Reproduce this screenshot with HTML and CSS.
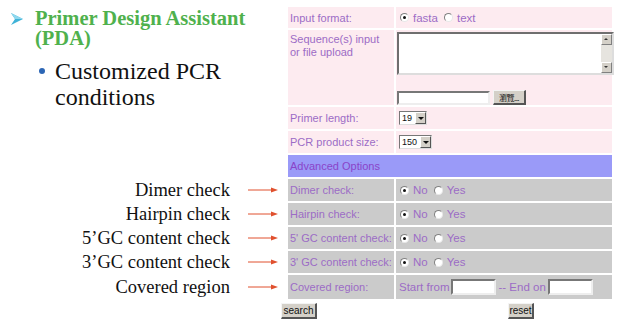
FILE: index.html
```html
<!DOCTYPE html>
<html lang="en">
<head>
    <meta charset="UTF-8">
    <title>Primer Design Assistant (PDA)</title>
    <link rel="stylesheet" href="styles.css">
</head>
<body>
    <div class="slide">
        <div class="intro">
            <h1 class="title">
                <svg class="chevron" width="14" height="14" viewBox="0 0 14 14">
                    <polygon points="1,1 13,7 1,13 5,7" fill="#3fb3d8"/>
                    <polygon points="1,1 13,7 5,7" fill="#8fd8ee"/>
                </svg>
                <span>Primer Design Assistant (PDA)</span>
            </h1>
            <p class="bullet"><span class="dot"></span>Customized PCR conditions</p>
        </div>

        <div class="label pink">Input format:</div>
        <div class="value pink">
            <span class="radio on"></span>fasta
            <span class="radio"></span>text
        </div>

        <div class="label pink top">Sequence(s) input<br>or file upload</div>
        <div class="value pink stack">
            <div class="textarea">
                <div class="scroll">
                    <span class="sbtn up"></span>
                    <span class="sbtn down"></span>
                </div>
            </div>
            <div class="file">
                <span class="field wide"></span>
                <span class="btn browse">瀏覽...</span>
            </div>
        </div>

        <div class="label pink">Primer length:</div>
        <div class="value pink"><span class="select">19<span class="arrow"></span></span></div>

        <div class="label pink">PCR product size:</div>
        <div class="value pink"><span class="select">150<span class="arrow"></span></span></div>

        <div class="advanced">Advanced Options</div>

        <div class="note">Dimer check</div>
        <div class="pointer"><svg width="30" height="6" viewBox="0 0 30 6"><line x1="0" y1="3" x2="24" y2="3" stroke="#e0502e" stroke-width="1"/><polygon points="23,0.5 30,3 23,5.5" fill="#e0502e"/></svg></div>
        <div class="label grey">Dimer check:</div>
        <div class="value grey"><span class="radio on"></span>No <span class="radio"></span>Yes</div>

        <div class="note">Hairpin check</div>
        <div class="pointer"><svg width="30" height="6" viewBox="0 0 30 6"><line x1="0" y1="3" x2="24" y2="3" stroke="#e0502e" stroke-width="1"/><polygon points="23,0.5 30,3 23,5.5" fill="#e0502e"/></svg></div>
        <div class="label grey">Hairpin check:</div>
        <div class="value grey"><span class="radio on"></span>No <span class="radio"></span>Yes</div>

        <div class="note">5’GC content check</div>
        <div class="pointer"><svg width="30" height="6" viewBox="0 0 30 6"><line x1="0" y1="3" x2="24" y2="3" stroke="#e0502e" stroke-width="1"/><polygon points="23,0.5 30,3 23,5.5" fill="#e0502e"/></svg></div>
        <div class="label grey">5' GC content check:</div>
        <div class="value grey"><span class="radio on"></span>No <span class="radio"></span>Yes</div>

        <div class="note">3’GC content check</div>
        <div class="pointer"><svg width="30" height="6" viewBox="0 0 30 6"><line x1="0" y1="3" x2="24" y2="3" stroke="#e0502e" stroke-width="1"/><polygon points="23,0.5 30,3 23,5.5" fill="#e0502e"/></svg></div>
        <div class="label grey">3' GC content check:</div>
        <div class="value grey"><span class="radio on"></span>No <span class="radio"></span>Yes</div>

        <div class="note">Covered region</div>
        <div class="pointer"><svg width="30" height="6" viewBox="0 0 30 6"><line x1="0" y1="3" x2="24" y2="3" stroke="#e0502e" stroke-width="1"/><polygon points="23,0.5 30,3 23,5.5" fill="#e0502e"/></svg></div>
        <div class="label grey">Covered region:</div>
        <div class="value grey">Start from <span class="field"></span> -- End on <span class="field"></span></div>

        <div class="actions">
            <span class="btn">search</span>
            <span class="btn reset">reset</span>
        </div>
    </div>
</body>
</html>
```

FILE: styles.css
```css
body {
    margin: 0;
    background-color: #fff;
    font-family: "Liberation Sans", Arial, sans-serif;
}

.slide {
    display: grid;
    grid-template-columns: 236px 48px 106px 216px;
    grid-template-rows: 21px 75px 22px 22px 22px 22px 22px 22px 22px 24px auto;
    column-gap: 2px;
    row-gap: 2px;
    padding-top: 7px;
    width: 620px;
}

.intro {
    grid-column: 1 / 3;
    grid-row: 1 / 6;
    font-family: "Liberation Serif", "Times New Roman", serif;
}

.title {
    display: flex;
    align-items: flex-start;
    margin: 0;
    padding: 1px 0 0 10px;
    font-size: 20.5px;
    line-height: 20px;
    color: #4fb14d;
}

.chevron {
    flex: none;
    margin: 4px 11px 0 0;
}

.bullet {
    position: relative;
    margin: 10px 0 0 55px;
    font-size: 24px;
    line-height: 26px;
    color: #111;
}

.dot {
    position: absolute;
    left: -16px;
    top: 10px;
    width: 6px;
    height: 6px;
    border-radius: 50%;
    background-color: #2c66b5;
}

.label, .value, .advanced {
    display: flex;
    align-items: center;
    font-size: 11px;
    color: #9c6cc6;
    white-space: nowrap;
}

.label {
    padding-left: 2px;
}

.label.top {
    align-items: flex-start;
    padding-top: 3px;
    line-height: 13px;
}

.value {
    padding-left: 3px;
    font-size: 11.5px;
}

.pink {
    background-color: #fdebf0;
}

.grey {
    background-color: #cbcbcb;
}

.advanced {
    grid-column: 3 / 5;
    padding-left: 2px;
    background-color: #9a9af8;
    color: #8a44c8;
}

.note {
    grid-column: 1;
    display: flex;
    align-items: center;
    justify-content: flex-end;
    padding-right: 6px;
    font-family: "Liberation Serif", "Times New Roman", serif;
    font-size: 18.5px;
    color: #111;
}

.pointer {
    display: flex;
    align-items: center;
    padding-left: 10px;
}

.radio {
    display: inline-block;
    position: relative;
    box-sizing: border-box;
    width: 9px;
    height: 9px;
    margin: 0 4px 0 1px;
    border-radius: 50%;
    border: 1px solid #808080;
    border-right-color: #e8e8e8;
    border-bottom-color: #e8e8e8;
    background-color: #fff;
}

.value .radio ~ .radio {
    margin-left: 6px;
}

.radio.on::after {
    content: "";
    position: absolute;
    left: 2px;
    top: 2px;
    width: 3px;
    height: 3px;
    border-radius: 50%;
    background-color: #111;
}

.stack {
    flex-direction: column;
    align-items: flex-start;
    padding: 2px 0 0 1px;
}

.textarea {
    position: relative;
    box-sizing: border-box;
    width: 217px;
    height: 44px;
    background-color: #fff;
    border: 2px solid #6f6f6f;
    border-right-color: #ddd;
    border-bottom-color: #ddd;
}

.scroll {
    position: absolute;
    right: 0;
    top: 0;
    bottom: 0;
    width: 11px;
    display: flex;
    flex-direction: column;
    justify-content: space-between;
    background-color: #e6e4df;
}

.sbtn {
    position: relative;
    height: 11px;
    background-color: #d4d0c8;
    border: 1px solid #fff;
    border-right-color: #808080;
    border-bottom-color: #808080;
    box-sizing: border-box;
}

.sbtn::after {
    content: "";
    position: absolute;
    left: 2px;
    top: 3px;
    border-left: 2px solid transparent;
    border-right: 2px solid transparent;
}

.sbtn.up::after {
    border-bottom: 2px solid #333;
}

.sbtn.down::after {
    border-top: 2px solid #333;
}

.file {
    display: flex;
    align-items: center;
    gap: 3px;
    margin-top: 15px;
}

.field {
    display: inline-block;
    box-sizing: border-box;
    width: 45px;
    height: 16px;
    margin: 0 2px;
    background-color: #fff;
    border: 2px solid #777;
    border-right-color: #eee;
    border-bottom-color: #eee;
}

.field.wide {
    width: 93px;
    height: 14px;
    margin: 0;
}

.btn {
    display: inline-flex;
    align-items: center;
    justify-content: center;
    box-sizing: border-box;
    height: 15px;
    padding: 0 4px;
    font-size: 10px;
    color: #111;
    white-space: nowrap;
    background-color: #d4d0c8;
    border: 1px solid #f4f4f4;
    border-right: 2px solid #555;
    border-bottom: 2px solid #555;
}

.browse {
    width: 33px;
    padding: 0;
    font-family: "Noto Sans CJK TC", sans-serif;
    font-size: 8px;
    letter-spacing: -0.5px;
}

.select {
    display: inline-flex;
    align-items: center;
    box-sizing: border-box;
    height: 14px;
    padding-left: 2px;
    font-size: 9px;
    color: #111;
    background-color: #fff;
    border: 1px solid #777;
    border-right-color: #ddd;
    border-bottom-color: #ddd;
}

.arrow {
    position: relative;
    display: inline-block;
    box-sizing: border-box;
    width: 11px;
    height: 12px;
    margin-left: 3px;
    background-color: #d4d0c8;
    border: 1px solid #fff;
    border-right-color: #555;
    border-bottom-color: #555;
}

.arrow::after {
    content: "";
    position: absolute;
    left: 2px;
    top: 4px;
    border-left: 3px solid transparent;
    border-right: 3px solid transparent;
    border-top: 3px solid #111;
}

.actions {
    grid-column: 3 / 5;
    display: flex;
    margin: 2px 0 0 -7px;
}

.actions .btn {
    width: 36px;
    height: 16px;
}

.actions .reset {
    width: 26px;
    margin-left: 191px;
}
```
